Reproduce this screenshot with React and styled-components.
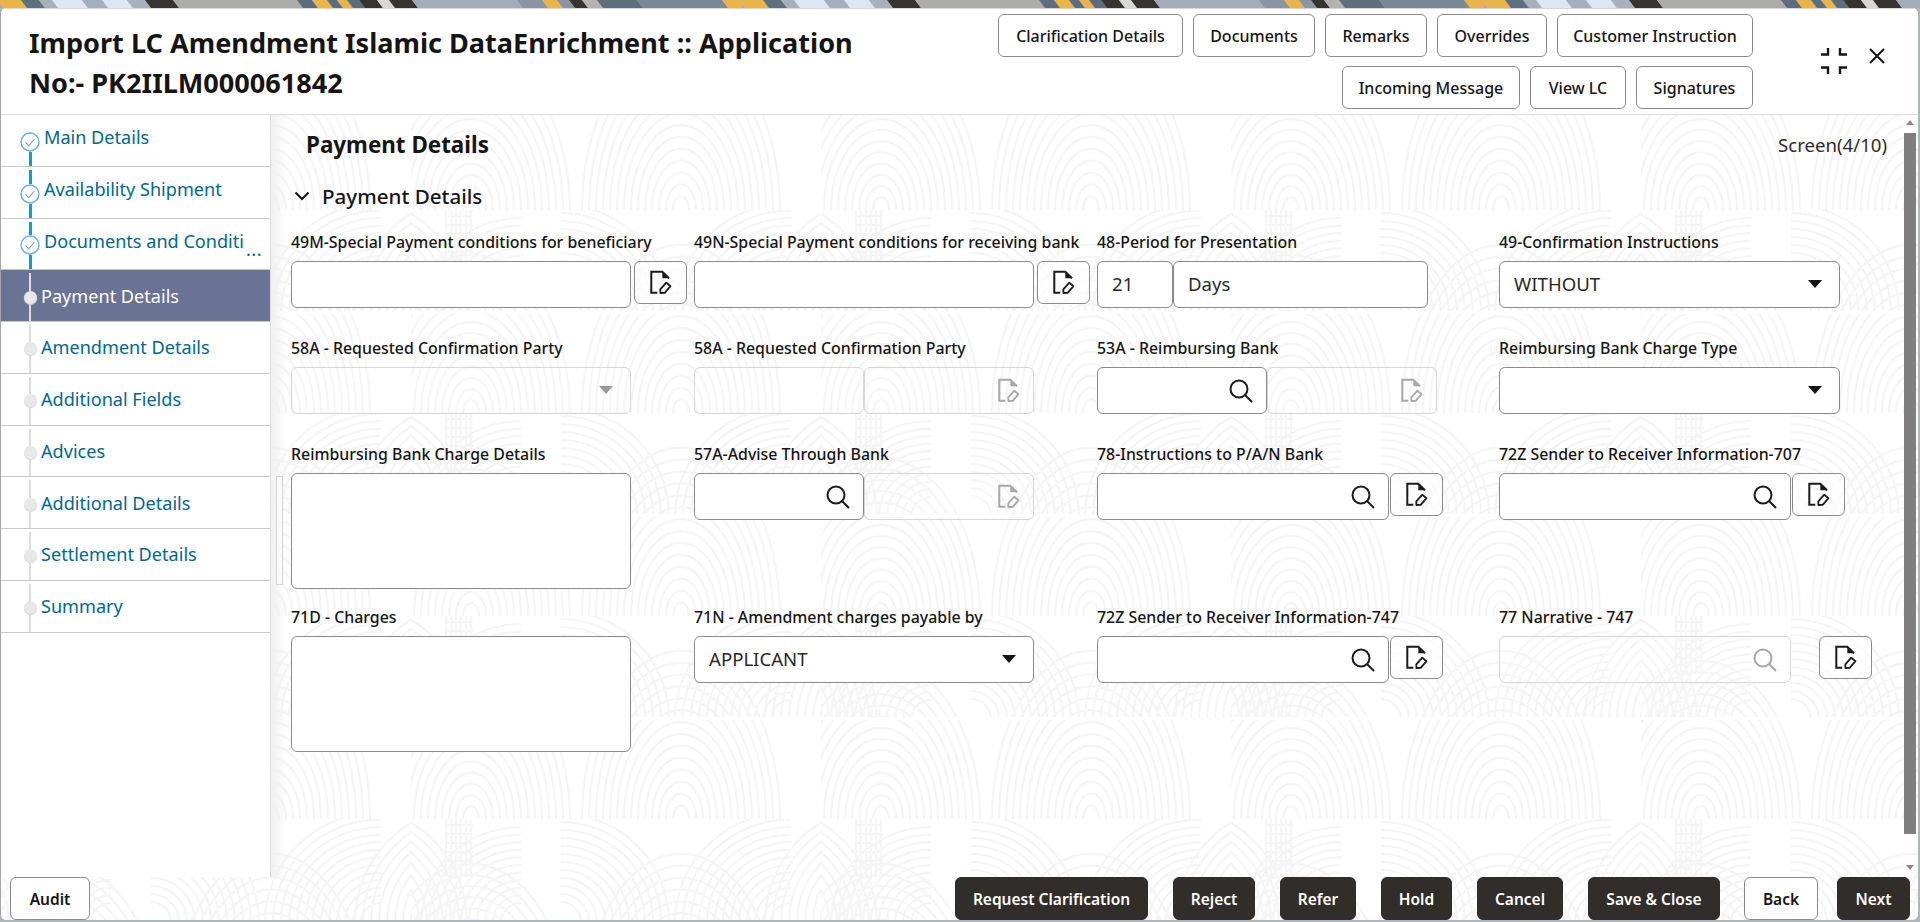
import React from "react";
import styled, { createGlobalStyle } from "styled-components";

const Global = createGlobalStyle`
  html, body { margin: 0; padding: 0; background: #a9b9bb; }
  body { font-family: "Noto Sans", "Open Sans", sans-serif; color: #161513; overflow: hidden; }
  * { box-sizing: border-box; }
`;

const Page = styled.div`
  width: 1920px;
  height: 922px;
  display: flex;
  flex-direction: column;
  overflow: hidden;
`;
const Wallpaper = styled.svg`
  display: block;
  flex: none;
  width: 1920px;
  height: 8px;
`;
const Modal = styled.div`
  position: relative;
  isolation: isolate;
  width: 1918px;
  height: 912px;
  flex: none;
  display: flex;
  flex-direction: column;
  background: #fff;
  border-radius: 6px 6px 6px 6px;
  border-left: 1px solid #a5a5a5;
  overflow: hidden;
`;
const Fingerprint = styled.svg`
  position: absolute;
  inset: 0;
  width: 100%;
  height: 100%;
  z-index: -1;
`;
const Header = styled.header`
  height: 107px;
  flex: none;
  display: flex;
  background: #fff;
  border-bottom: 1px solid #dcdcdc;
  border-top: 1px solid #d5d5d5;
`;
const Title = styled.h1`
  margin: 0;
  padding: 14px 0 0 28px;
  width: 900px;
  flex: none;
  font-size: 27.1px;
  line-height: 40px;
  font-weight: 700;
  color: #161513;
`;
const ActionArea = styled.div`
  width: 852px;
  flex: none;
  padding-top: 5px;
  display: flex;
  flex-direction: column;
  gap: 9px;
`;
const ActionRow = styled.div`
  display: flex;
  justify-content: flex-end;
  gap: 10px;
`;
const ActionButton = styled.div`
  width: ${(p) => p.$w}px;
  height: 43px;
  display: flex;
  align-items: center;
  justify-content: center;
  border: 1px solid #8b8b8b;
  border-radius: 6px;
  font-size: 16px;
  font-weight: 500;
  background: #fff;
  color: #161513;
  white-space: nowrap;
`;
const WindowIcons = styled.div`
  display: flex;
  align-items: flex-start;
  gap: 22px;
  padding: 39px 0 0 68px;
`;
const Body = styled.div`
  height: 762px;
  flex: none;
  display: flex;
`;
const Sidebar = styled.nav`
  width: 270px;
  flex: none;
  background: #fff;
  border-right: 1px solid #dcdfe8;
`;
const Step = styled.div`
  height: 51.75px;
  display: flex;
  align-items: stretch;
  padding-left: 19px;
  border-bottom: 1px solid #c9c9c9;
  background: ${(p) => (p.$active ? "#6a7393" : "transparent")};
`;
const Rail = styled.div`
  width: 20px;
  flex: none;
  display: flex;
  flex-direction: column;
  align-items: center;
  padding-top: 3px;
`;
const RailLine = styled.span`
  flex: 1;
  width: ${(p) => (p.$done ? 3 : 2)}px;
  background: ${(p) => (p.$hidden ? "transparent" : p.$done ? "#0f9bd6" : "#dcdcdc")};
`;
const CheckMark = styled.svg`
  flex: none;
  width: 20px;
  height: 20px;
  display: block;
`;
const Dot = styled.span`
  flex: none;
  width: 13px;
  height: 13px;
  border-radius: 50%;
  background: #e8e8e8;
  box-shadow: 0 1px 1px #d2d2d2;
`;
const StepLabel = styled.span`
  align-self: center;
  position: relative;
  flex: none;
  margin-left: ${(p) => (p.$done ? 4 : 1)}px;
  padding-bottom: ${(p) => (p.$done ? 6 : 0)}px;
  font-size: 18.1px;
  line-height: 24px;
  color: ${(p) => (p.$active ? "#fff" : "#00688c")};
  white-space: nowrap;
`;
const More = styled.span`
  position: absolute;
  left: 202px;
  top: 8px;
  font-size: 18px;
  letter-spacing: 0.5px;
  color: #00688c;
`;
const Content = styled.main`
  flex: 1;
  position: relative;
  display: flex;
  min-width: 0;
  background: linear-gradient(to right, #f0f0f0, rgba(240, 240, 240, 0) 16px);
`;
const Splitter = styled.div`
  position: absolute;
  left: 5px;
  top: 361px;
  width: 7px;
  height: 109px;
  border: 1px solid #d4d4d4;
  background: #fafafa;
`;
const Pane = styled.div`
  flex: 1;
  min-width: 0;
  padding-left: 20px;
`;
const PaneHead = styled.div`
  height: 61px;
  display: flex;
  align-items: center;
  justify-content: space-between;
  padding: 0 16px 2px 15px;
`;
const PaneTitle = styled.h2`
  margin: 0;
  font-size: 22.4px;
  font-weight: 700;
  color: #161513;
`;
const ScreenCount = styled.span`
  font-size: 18.6px;
  color: #2d2b29;
`;
const SectionHead = styled.div`
  height: 40px;
  display: flex;
  align-items: center;
  gap: 12px;
  padding-left: 3px;
  margin-bottom: 14px;
  font-size: 20.6px;
  font-weight: 500;
`;
const Grid = styled.div`
  display: grid;
  grid-template-columns: 403px 403px 402px 403px;
  grid-template-rows: 106px 106px 163px auto;
`;
const Field = styled.div`
  display: flex;
  flex-direction: column;
  min-width: 0;
`;
const Label = styled.label`
  height: 24px;
  margin-bottom: 7px;
  font-size: 15.9px;
  line-height: 24px;
  font-weight: 500;
  white-space: nowrap;
  color: #161513;
`;
const Controls = styled.div`
  display: flex;
  align-items: flex-start;
`;
const InputBox = styled.div`
  width: ${(p) => p.$w}px;
  height: ${(p) => p.$h || 47}px;
  flex: none;
  display: flex;
  align-items: center;
  justify-content: ${(p) => (p.$end ? "flex-end" : "space-between")};
  padding: ${(p) => (p.$end ? "0 13px 0 0" : "0 14px 2px")};
  border: 1px solid ${(p) => (p.$off ? "#d6d6d6" : "#8b8b8b")};
  border-radius: 6px;
  background: ${(p) => (p.$off ? "rgba(255,255,255,0.15)" : "#fff")};
  font-size: 18.6px;
  color: #2b2927;
`;
const DocButton = styled.div`
  width: ${(p) => p.$w || 53}px;
  height: 43px;
  flex: none;
  margin-left: ${(p) => p.$gap}px;
  display: flex;
  align-items: center;
  justify-content: center;
  border: 1px solid #8b8b8b;
  border-radius: 6px;
  background: rgba(255, 255, 255, 0.6);
`;
const Caret = styled.span`
  width: 0;
  height: 0;
  flex: none;
  margin-left: auto;
  margin-right: 3px;
  border-left: 7px solid transparent;
  border-right: 7px solid transparent;
  border-top: 8px solid ${(p) => (p.$off ? "#9a9a9a" : "#161513")};
`;
const Scrollbar = styled.div`
  width: 14px;
  flex: none;
  margin-right: 1px;
  display: flex;
  flex-direction: column;
  align-items: center;
  padding-top: 5px;
`;
const ScrollArrow = styled.span`
  width: 0;
  height: 0;
  flex: none;
  border-left: 4px solid transparent;
  border-right: 4px solid transparent;
  ${(p) => (p.$up ? "border-bottom: 5px solid #8a8a8a;" : "border-top: 5px solid #8a8a8a;")}
`;
const ScrollThumb = styled.span`
  width: 12px;
  height: 701px;
  flex: none;
  margin: 8px 0 31px;
  background: #7f7f7f;
`;
const Footer = styled.footer`
  flex: 1;
  display: flex;
  align-items: stretch;
  justify-content: space-between;
  padding: 0 8px 0 9px;
`;
const FooterGroup = styled.div`
  display: flex;
  gap: 25px;
`;
const FooterButton = styled.div`
  width: ${(p) => p.$w}px;
  margin-left: ${(p) => p.$pull || 0}px;
  display: flex;
  align-items: center;
  justify-content: center;
  border-radius: 6px;
  font-size: 15.5px;
  font-weight: 600;
  white-space: nowrap;
  background: ${(p) => (p.$ghost ? "#fff" : "#312d2a")};
  color: ${(p) => (p.$ghost ? "#161513" : "#fff")};
  border: 1px solid ${(p) => (p.$ghost ? "#8b8b8b" : "#312d2a")};
`;

const bands = [
  [0, 24, "#e8b54d"], [24, 42, "#5e6f7e"], [42, 55, "#a8b0bc"], [55, 85, "#dfe5f2"], [85, 105, "#a6afbd"],
  [105, 130, "#dfe5f2"], [130, 148, "#a9b1bd"], [148, 176, "#37332f"], [176, 300, "#aeaca8"], [300, 315, "#5d6d7c"],
  [315, 330, "#e8b54d"], [330, 340, "#5d6d7c"], [340, 350, "#e8b54d"], [350, 362, "#5d6d7c"], [362, 380, "#37332f"],
  [380, 392, "#d9d8d2"], [392, 415, "#37332f"], [415, 520, "#a3adba"], [520, 545, "#8a94a2"], [545, 560, "#e8b54d"],
  [560, 572, "#8a94a2"], [572, 585, "#37332f"], [585, 600, "#b5b3ae"], [600, 640, "#5f6e7d"], [640, 725, "#7b8896"],
  [725, 746, "#e8b54d"],
];

const WallpaperStrip = () => (
  <Wallpaper viewBox="0 0 1920 8" preserveAspectRatio="none" aria-hidden="true">
    <defs>
      <pattern id="wall" width="742" height="8" patternUnits="userSpaceOnUse">
        <rect width="742" height="8" fill="#a3adba" />
        {bands.map(([a, b, c]) => (
          <polygon key={a} points={`${a - 3},0 ${b - 3},0 ${b + 3},8 ${a + 3},8`} fill={c} />
        ))}
      </pattern>
    </defs>
    <rect width="1920" height="8" fill="url(#wall)" />
  </Wallpaper>
);

const arcs = [];
const addArcs = (cx, cy, from, to, step, sy, sweepA, sweepB) => {
  for (let r = from; r <= to; r += step) {
    const ax = cx + r * Math.cos(sweepA);
    const ay = cy - r * sy * Math.sin(sweepA);
    const bx = cx + r * Math.cos(sweepB);
    const by = cy - r * sy * Math.sin(sweepB);
    arcs.push(`M${ax.toFixed(1)} ${ay.toFixed(1)}A${r} ${(r * sy).toFixed(1)} 0 0 0 ${bx.toFixed(1)} ${by.toFixed(1)}`);
  }
};
addArcs(270, 203, 8, 104, 7, 1.7, 0, Math.PI);
addArcs(60, 203, 8, 100, 7, 1.6, 0, Math.PI);
addArcs(150, 103, 20, 110, 8, 1, 0, Math.PI / 2);
addArcs(380, 103, 20, 120, 8, 0.95, Math.PI / 2, Math.PI);
addArcs(110, 103, 20, 100, 8, 0.95, Math.PI / 2, Math.PI);
addArcs(470, 103, 20, 120, 8, 1, Math.PI / 2, Math.PI);
addArcs(-60, 103, 20, 120, 8, 1, 0, Math.PI / 2);
for (let x = 35; x <= 62; x += 5) arcs.push(`M${x} 0V58`);
for (let y = 6; y <= 48; y += 9) arcs.push(`M35 ${y}H62`);

const FingerprintBackdrop = () => (
  <Fingerprint aria-hidden="true">
    <defs>
      <pattern id="print" width="410" height="203" patternUnits="userSpaceOnUse" y="-1">
        <rect width="410" height="203" fill="#fff" />
        <path d={arcs.join("")} fill="none" stroke="#f5f5f5" strokeWidth="2.2" />
        <rect y="101" width="410" height="3" fill="#fff" />
      </pattern>
    </defs>
    <rect width="100%" height="100%" fill="url(#print)" />
  </Fingerprint>
);

const DocIcon = ({ off }) => {
  const c = off ? "#a8a8a8" : "#1d1b19";
  return (
    <svg width="23" height="25" viewBox="0 0 23 25" fill="none" aria-hidden="true">
      <path d="M8.3 22.7H2.3V1.7H13.3L20 8.3" stroke={c} strokeWidth="2" />
      <path d="M13.3 1.7L20 8.3H13.3Z" fill={c} />
      <path d="M11.3 19.3L17.3 12.7L21.5 16.2L15.7 22.8L11.4 23Z" stroke={c} strokeWidth="1.8" strokeLinejoin="round" />
    </svg>
  );
};
const SearchIcon = ({ off }) => {
  const c = off ? "#a8a8a8" : "#1d1b19";
  return (
    <svg width="24" height="24" viewBox="0 0 24 24" fill="none" aria-hidden="true">
      <circle cx="10" cy="10" r="8.5" stroke={c} strokeWidth="2" />
      <path d="M16 16L23 23" stroke={c} strokeWidth="2" />
    </svg>
  );
};
const Check = () => (
  <CheckMark viewBox="0 0 20 20" fill="none" aria-hidden="true">
    <circle cx="10" cy="10" r="9" fill="#fff" stroke="#67aee2" strokeWidth="1.4" />
    <path d="M5.5 10.5L8.8 13.6L14.5 7" stroke="#7aa5c6" strokeWidth="1.1" />
  </CheckMark>
);
const ChevronDown = () => (
  <svg width="16" height="10" viewBox="0 0 16 10" fill="none" aria-hidden="true">
    <path d="M1.5 1.5L8 8L14.5 1.5" stroke="#161513" strokeWidth="2" />
  </svg>
);
const CollapseIcon = () => (
  <svg width="26" height="26" viewBox="0 0 26 26" fill="none" aria-hidden="true">
    <path d="M0 6.5H7V0M19 0V6.5H26M0 19.5H7V26M19 26V19.5H26" stroke="#161513" strokeWidth="2.4" />
  </svg>
);
const CloseIcon = () => (
  <svg width="16" height="16" viewBox="0 0 16 16" fill="none" aria-hidden="true">
    <path d="M1 1L15 15M15 1L1 15" stroke="#161513" strokeWidth="2" />
  </svg>
);

const steps = [
  { name: "Main Details", done: true, first: true },
  { name: "Availability Shipment", done: true },
  { name: "Documents and Conditi", done: true, more: true },
  { name: "Payment Details", active: true },
  { name: "Amendment Details" },
  { name: "Additional Fields" },
  { name: "Advices" },
  { name: "Additional Details" },
  { name: "Settlement Details" },
  { name: "Summary" },
];

const SearchBox = ({ w, off }) => (
  <InputBox $w={w} $off={off} $end>
    <SearchIcon off={off} />
  </InputBox>
);

export default function App() {
  return (
    <Page>
      <Global />
      <WallpaperStrip />
      <Modal>
        <FingerprintBackdrop />
        <Header>
          <Title>
            Import LC Amendment Islamic DataEnrichment :: Application
            <br />
            No:- PK2IILM000061842
          </Title>
          <ActionArea>
            <ActionRow>
              <ActionButton $w={185}>Clarification Details</ActionButton>
              <ActionButton $w={122}>Documents</ActionButton>
              <ActionButton $w={102}>Remarks</ActionButton>
              <ActionButton $w={110}>Overrides</ActionButton>
              <ActionButton $w={196}>Customer Instruction</ActionButton>
            </ActionRow>
            <ActionRow>
              <ActionButton $w={178}>Incoming Message</ActionButton>
              <ActionButton $w={96}>View LC</ActionButton>
              <ActionButton $w={117}>Signatures</ActionButton>
            </ActionRow>
          </ActionArea>
          <WindowIcons>
            <CollapseIcon />
            <CloseIcon />
          </WindowIcons>
        </Header>
        <Body>
          <Sidebar>
            {steps.map((s) => (
              <Step key={s.name} $active={s.active}>
                <Rail>
                  <RailLine $done={s.done} $hidden={s.first} />
                  {s.done ? <Check /> : <Dot />}
                  <RailLine $done={s.done} />
                </Rail>
                <StepLabel $done={s.done} $active={s.active}>
                  {s.name}
                  {s.more && <More>...</More>}
                </StepLabel>
              </Step>
            ))}
          </Sidebar>
          <Content>
            <Splitter />
            <Pane>
              <PaneHead>
                <PaneTitle>Payment Details</PaneTitle>
                <ScreenCount>Screen(4/10)</ScreenCount>
              </PaneHead>
              <SectionHead>
                <ChevronDown />
                Payment Details
              </SectionHead>
              <Grid>
                <Field>
                  <Label>49M-Special Payment conditions for beneficiary</Label>
                  <Controls>
                    <InputBox $w={340} />
                    <DocButton $gap={3}><DocIcon /></DocButton>
                  </Controls>
                </Field>
                <Field>
                  <Label>49N-Special Payment conditions for receiving bank</Label>
                  <Controls>
                    <InputBox $w={340} />
                    <DocButton $gap={3}><DocIcon /></DocButton>
                  </Controls>
                </Field>
                <Field>
                  <Label>48-Period for Presentation</Label>
                  <Controls>
                    <InputBox $w={76}>21</InputBox>
                    <InputBox $w={255}>Days</InputBox>
                  </Controls>
                </Field>
                <Field>
                  <Label>49-Confirmation Instructions</Label>
                  <Controls>
                    <InputBox $w={341}>WITHOUT<Caret /></InputBox>
                  </Controls>
                </Field>

                <Field>
                  <Label>58A - Requested Confirmation Party</Label>
                  <Controls>
                    <InputBox $w={340} $off><Caret $off /></InputBox>
                  </Controls>
                </Field>
                <Field>
                  <Label>58A - Requested Confirmation Party</Label>
                  <Controls>
                    <InputBox $w={170} $off />
                    <InputBox $w={170} $off $end><DocIcon off /></InputBox>
                  </Controls>
                </Field>
                <Field>
                  <Label>53A - Reimbursing Bank</Label>
                  <Controls>
                    <SearchBox w={170} />
                    <InputBox $w={170} $off $end><DocIcon off /></InputBox>
                  </Controls>
                </Field>
                <Field>
                  <Label>Reimbursing Bank Charge Type</Label>
                  <Controls>
                    <InputBox $w={341}><Caret /></InputBox>
                  </Controls>
                </Field>

                <Field>
                  <Label>Reimbursing Bank Charge Details</Label>
                  <Controls>
                    <InputBox $w={340} $h={116} />
                  </Controls>
                </Field>
                <Field>
                  <Label>57A-Advise Through Bank</Label>
                  <Controls>
                    <SearchBox w={170} />
                    <InputBox $w={170} $off $end><DocIcon off /></InputBox>
                  </Controls>
                </Field>
                <Field>
                  <Label>78-Instructions to P/A/N Bank</Label>
                  <Controls>
                    <SearchBox w={292} />
                    <DocButton $gap={1}><DocIcon /></DocButton>
                  </Controls>
                </Field>
                <Field>
                  <Label>72Z Sender to Receiver Information-707</Label>
                  <Controls>
                    <SearchBox w={292} />
                    <DocButton $gap={1}><DocIcon /></DocButton>
                  </Controls>
                </Field>

                <Field>
                  <Label>71D - Charges</Label>
                  <Controls>
                    <InputBox $w={340} $h={116} />
                  </Controls>
                </Field>
                <Field>
                  <Label>71N - Amendment charges payable by</Label>
                  <Controls>
                    <InputBox $w={340}>APPLICANT<Caret /></InputBox>
                  </Controls>
                </Field>
                <Field>
                  <Label>72Z Sender to Receiver Information-747</Label>
                  <Controls>
                    <SearchBox w={292} />
                    <DocButton $gap={1}><DocIcon /></DocButton>
                  </Controls>
                </Field>
                <Field>
                  <Label>77 Narrative - 747</Label>
                  <Controls>
                    <SearchBox w={292} off />
                    <DocButton $gap={28}><DocIcon /></DocButton>
                  </Controls>
                </Field>
              </Grid>
            </Pane>
            <Scrollbar>
              <ScrollArrow $up />
              <ScrollThumb />
              <ScrollArrow />
            </Scrollbar>
          </Content>
        </Body>
        <Footer>
          <FooterButton $w={80} $ghost>Audit</FooterButton>
          <FooterGroup>
            <FooterButton $w={193}>Request Clarification</FooterButton>
            <FooterButton $w={82}>Reject</FooterButton>
            <FooterButton $w={76}>Refer</FooterButton>
            <FooterButton $w={71}>Hold</FooterButton>
            <FooterButton $w={86}>Cancel</FooterButton>
            <FooterButton $w={132}>Save &amp; Close</FooterButton>
            <FooterButton $w={74} $ghost $pull={-1}>Back</FooterButton>
            <FooterButton $w={73} $pull={-6}>Next</FooterButton>
          </FooterGroup>
        </Footer>
      </Modal>
    </Page>
  );
}
